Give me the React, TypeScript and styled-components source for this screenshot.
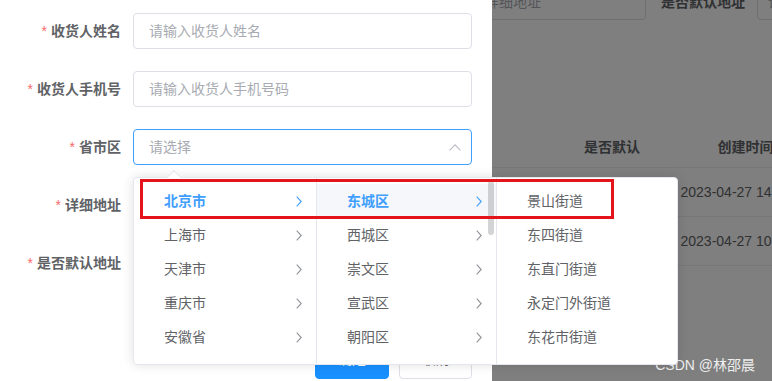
import React from "react";
import styled, { createGlobalStyle } from "styled-components";

const Global = createGlobalStyle`
  html, body { margin: 0; padding: 0; }
  body {
    font-family: "Liberation Sans", "Noto Sans CJK SC", sans-serif;
    font-size: 14px;
    background: #fff;
  }
  * { box-sizing: border-box; }
`;

const Stage = styled.div`
  position: relative;
  width: 772px;
  height: 381px;
  overflow: hidden;
`;

/* ---------- background page ---------- */
const BackPage = styled.div`
  width: 772px;
  height: 381px;
  background: #fff;
  padding-left: 432px;
  display: flex;
  flex-direction: column;
`;

const SearchBar = styled.div`
  display: flex;
  align-items: center;
  height: 36px;
  margin-top: -16px;
  flex: none;
`;

const SearchInput = styled.div<{ $w: number }>`
  width: ${(p) => p.$w}px;
  height: 36px;
  flex: none;
  border: 1px solid #dcdfe6;
  border-radius: 4px;
  padding: 0 10px;
  display: flex;
  align-items: center;
  color: #a8abb2;
  white-space: nowrap;
  overflow: hidden;
  line-height: 20px;
`;

const SearchLabel = styled.div`
  flex: none;
  margin: 0 12px 0 15px;
  font-weight: 700;
  color: #606266;
  line-height: 20px;
  white-space: nowrap;
`;

const Table = styled.div`
  margin-top: 104px;
  margin-left: -232px;
  display: grid;
  grid-template-columns: 347px 130px 137px;
  width: 614px;
  flex: none;
`;

const HeadCell = styled.div`
  height: 44px;
  display: flex;
  align-items: center;
  justify-content: center;
  font-weight: 700;
  color: #606266;
  border-bottom: 1px solid #ebeef5;
  white-space: nowrap;
`;

const Cell = styled.div`
  height: 49px;
  display: flex;
  align-items: center;
  justify-content: center;
  color: #606266;
  border-bottom: 1px solid #ebeef5;
  white-space: nowrap;
`;

const Overlay = styled.div`
  position: absolute;
  inset: 0;
  background: rgba(0, 0, 0, 0.5);
`;

const Watermark = styled.div`
  position: absolute;
  right: 17px;
  bottom: 8px;
  color: rgba(255, 255, 255, 0.88);
  font-size: 14px;
  line-height: 16px;
  white-space: nowrap;
`;

/* ---------- dialog ---------- */
const Dialog = styled.div`
  position: absolute;
  left: 0;
  top: 0;
  width: 492px;
  height: 381px;
  background: #fff;
  display: flex;
  flex-direction: column;
  padding-top: 13px;
`;

const FormItem = styled.div`
  display: flex;
  align-items: center;
  height: 36px;
  margin-bottom: 22px;
  flex: none;
`;

const Label = styled.label`
  width: 121px;
  margin-right: 12px;
  text-align: right;
  font-weight: 700;
  color: #606266;
  font-size: 14px;
  line-height: 20px;
  white-space: nowrap;
`;

const Star = styled.span`
  color: #f56c6c;
  font-weight: 400;
  margin-right: 4px;
`;

const Input = styled.div<{ $focus?: boolean }>`
  width: 339px;
  height: 36px;
  border: 1px solid ${(p) => (p.$focus ? "#409eff" : "#dcdfe6")};
  border-radius: 4px;
  padding: 0 10px 0 15px;
  display: flex;
  align-items: center;
  justify-content: space-between;
  color: #a8abb2;
  font-size: 14px;
  line-height: 20px;
  white-space: nowrap;
`;

const Footer = styled.div`
  display: flex;
  justify-content: flex-end;
  gap: 10px;
  padding-right: 20px;
  margin-top: 40px;
`;

const Button = styled.button<{ $primary?: boolean }>`
  width: ${(p) => (p.$primary ? 74 : 73)}px;
  height: 36px;
  border-radius: 4px;
  border: 1px solid ${(p) => (p.$primary ? "#1890ff" : "#dcdfe6")};
  background: ${(p) => (p.$primary ? "#1890ff" : "#fff")};
  color: ${(p) => (p.$primary ? "#fff" : "#606266")};
  font-family: inherit;
  font-size: 14px;
  line-height: 20px;
  padding: 0 0 4px;
`;

/* ---------- cascader popper ---------- */
const Popper = styled.div`
  position: absolute;
  left: 133px;
  top: 177px;
  width: 545px;
  height: 188px;
  background: #fff;
  border: 1px solid #e4e7ed;
  border-radius: 4px;
  box-shadow: 0 0 12px rgba(0, 0, 0, 0.12);
  display: flex;
`;

const PopArrow = styled.div`
  position: absolute;
  left: 35px;
  top: -6px;
  width: 10px;
  height: 10px;
  background: #fff;
  border-top: 1px solid #e4e7ed;
  border-left: 1px solid #e4e7ed;
  transform: rotate(45deg);
`;

const Menu = styled.div<{ $w: number; $last?: boolean }>`
  position: relative;
  width: ${(p) => p.$w}px;
  flex: none;
  height: 100%;
  overflow: hidden;
  padding: 6px 0;
  border-right: ${(p) => (p.$last ? "none" : "1px solid #e4e7ed")};
`;

const Node = styled.div<{ $active?: boolean; $hover?: boolean }>`
  height: 34px;
  display: flex;
  align-items: center;
  justify-content: space-between;
  padding: 0 14px 0 30px;
  font-size: 14px;
  line-height: 20px;
  color: ${(p) => (p.$active ? "#409eff" : "#606266")};
  font-weight: ${(p) => (p.$active ? 700 : 400)};
  background: ${(p) => (p.$hover ? "#f5f7fa" : "transparent")};
  white-space: nowrap;
`;

const Thumb = styled.div`
  position: absolute;
  right: 2px;
  top: 3px;
  width: 6px;
  height: 54px;
  border-radius: 3px;
  background: rgba(144, 147, 153, 0.4);
`;

const Highlight = styled.div`
  position: absolute;
  left: 140px;
  top: 179px;
  width: 474px;
  height: 40px;
  border: 3px solid #e3141c;
`;

const ChevronRight = ({ color }: { color: string }) => (
  <svg width="6" height="11" viewBox="0 0 6 11" fill="none">
    <polyline points="0.7,0.7 5.2,5.5 0.7,10.3" stroke={color} strokeWidth="1.1" />
  </svg>
);

const ChevronUp = () => (
  <svg width="12" height="7" viewBox="0 0 12 7" fill="none">
    <polyline points="0.6,6.3 6,0.9 11.4,6.3" stroke="#b8bbc2" strokeWidth="1.1" />
  </svg>
);

const provinces = ["北京市", "上海市", "天津市", "重庆市", "安徽省", "福建省"];
const districts = ["东城区", "西城区", "崇文区", "宣武区", "朝阳区", "丰台区"];
const streets = ["景山街道", "东四街道", "东直门街道", "永定门外街道", "东花市街道", "交道口街道"];

export default function App() {
  return (
    <>
      <Global />
      <Stage>
        <BackPage>
          <SearchBar>
            <SearchInput $w={214}>请输入详细地址</SearchInput>
            <SearchLabel>是否默认地址</SearchLabel>
            <SearchInput $w={200}>请选择</SearchInput>
          </SearchBar>
          <Table>
            <HeadCell>详细地址</HeadCell>
            <HeadCell>是否默认</HeadCell>
            <HeadCell>创建时间</HeadCell>
            <Cell>景山街道</Cell>
            <Cell>是</Cell>
            <Cell>2023-04-27 14:12:30</Cell>
            <Cell>东四街道</Cell>
            <Cell>否</Cell>
            <Cell>2023-04-27 10:25:16</Cell>
          </Table>
        </BackPage>
        <Overlay />
        <Watermark>CSDN @林邵晨</Watermark>

        <Dialog>
          <FormItem>
            <Label><Star>*</Star>收货人姓名</Label>
            <Input>请输入收货人姓名</Input>
          </FormItem>
          <FormItem>
            <Label><Star>*</Star>收货人手机号</Label>
            <Input>请输入收货人手机号码</Input>
          </FormItem>
          <FormItem>
            <Label><Star>*</Star>省市区</Label>
            <Input $focus>
              请选择
              <ChevronUp />
            </Input>
          </FormItem>
          <FormItem>
            <Label><Star>*</Star>详细地址</Label>
            <Input>请输入详细地址</Input>
          </FormItem>
          <FormItem>
            <Label><Star>*</Star>是否默认地址</Label>
            <Input>请选择</Input>
          </FormItem>
          <Footer>
            <Button $primary>确定</Button>
            <Button>取消</Button>
          </Footer>
        </Dialog>

        <Popper>
          <PopArrow />
          <Menu $w={183}>
            {provinces.map((p, i) => (
              <Node key={p} $active={i === 0}>
                {p}
                <ChevronRight color={i === 0 ? "#409eff" : "#909399"} />
              </Node>
            ))}
          </Menu>
          <Menu $w={180}>
            {districts.map((d, i) => (
              <Node key={d} $active={i === 0} $hover={i === 0}>
                {d}
                <ChevronRight color={i === 0 ? "#409eff" : "#909399"} />
              </Node>
            ))}
            <Thumb />
          </Menu>
          <Menu $w={180} $last>
            {streets.map((s) => (
              <Node key={s}>{s}</Node>
            ))}
          </Menu>
        </Popper>
        <Highlight />
      </Stage>
    </>
  );
}
